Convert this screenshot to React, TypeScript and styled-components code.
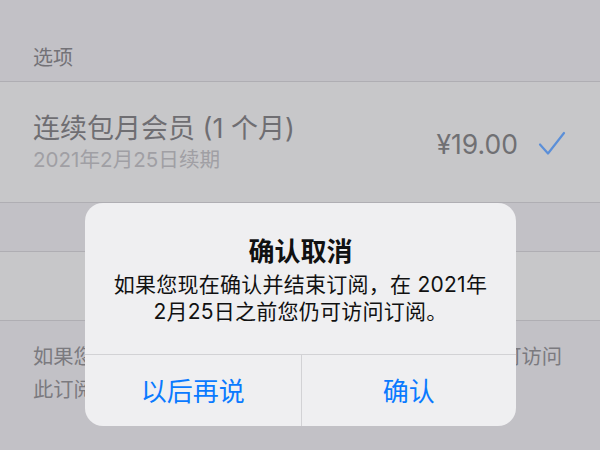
import React from "react";
import styled, { createGlobalStyle } from "styled-components";

const Global = createGlobalStyle`
  html, body { margin: 0; padding: 0; }
  body {
    width: 600px; height: 450px; overflow: hidden;
    background: #c2c1c6;
    font-family: Inter, "Noto Sans CJK SC", sans-serif;
  }
`;

const Page = styled.div`
  position: relative;
  width: 600px;
  height: 450px;
  background: #c2c1c6;
  overflow: hidden;
`;

const SectionHeader = styled.div`
  height: 82px;
  box-sizing: border-box;
  padding: 0 33px 10px;
  display: flex;
  align-items: flex-end;
  font-size: 20px;
  color: #737277;
  border-bottom: 1px solid #afaeb3;
`;

const Cell = styled.div<{ $h: number }>`
  height: ${(p) => p.$h}px;
  box-sizing: border-box;
  background: #c7c7c9;
  border-bottom: 1px solid #afaeb3;
  padding: 0 34px 0 33px;
  display: flex;
  align-items: center;
  justify-content: space-between;
`;

const Gap = styled.div`
  height: 48px;
  border-bottom: 1px solid #afaeb3;
`;

const TitleBlock = styled.div`
  display: flex;
  flex-direction: column;
  gap: 3px;
  margin-top: 0px;
`;

const CellTitle = styled.div`
  font-size: 27px;
  line-height: 32px;
  color: #6f6e72;
`;

const CellSub = styled.div`
  font-size: 20.6px;
  line-height: 24px;
  color: #a09fa4;
`;

const Trailing = styled.div`
  display: flex;
  align-items: center;
  gap: 20px;
  margin-top: 4px;
`;

const Price = styled.div`
  font-size: 26.5px;
  color: #707073;
`;

const Footer = styled.div`
  padding: 19px 33px 0;
  font-size: 20.3px;
  line-height: 33px;
  color: #7b7a7f;
  white-space: nowrap;
`;

const Dialog = styled.div`
  position: absolute;
  left: 85px;
  top: 203px;
  width: 431px;
  height: 223px;
  background: #efeff1;
  border-radius: 18px;
  display: flex;
  flex-direction: column;
  overflow: hidden;
`;

const DialogBody = styled.div`
  height: 152px;
  box-sizing: border-box;
  padding-top: 33px;
  border-bottom: 1px solid #d2d2d5;
  text-align: center;
  color: #111;
`;

const DialogTitle = styled.div`
  font-size: 26px;
  font-weight: 700;
  line-height: 32px;
  margin-bottom: 3px;
`;

const DialogText = styled.div`
  font-size: 21px;
  line-height: 27px;
  letter-spacing: 0.25px;
`;

const Buttons = styled.div`
  flex: 1;
  display: grid;
  grid-template-columns: 1fr 1fr;
`;

const DialogButton = styled.div<{ $divider?: boolean }>`
  display: flex;
  align-items: center;
  justify-content: center;
  font-size: 26px;
  color: #0a7aff;
  padding-bottom: 2px;
  ${(p) => (p.$divider ? "border-left: 1px solid #d2d2d5;" : "")}
`;

const Check = () => (
  <svg width="28" height="26" viewBox="0 0 28 26">
    <path d="M2 13.5 L10 22.5 L26 2" fill="none" stroke="#5b8fd8" strokeWidth="2.2" strokeLinecap="round" strokeLinejoin="round" />
  </svg>
);

export default function App() {
  return (
    <Page>
      <Global />
      <SectionHeader>选项</SectionHeader>
      <Cell $h={121}>
        <TitleBlock>
          <CellTitle>连续包月会员 (1 个月)</CellTitle>
          <CellSub>2021年2月25日续期</CellSub>
        </TitleBlock>
        <Trailing>
          <Price>¥19.00</Price>
          <Check />
        </Trailing>
      </Cell>
      <Gap />
      <Cell $h={69} />
      <Footer>
        如果您现在取消订阅，则在2021年2月25日之前您仍可访问
        <br />
        此订阅。
      </Footer>
      <Dialog>
        <DialogBody>
          <DialogTitle>确认取消</DialogTitle>
          <DialogText>
            如果您现在确认并结束订阅，在 2021年
            <br />
            2月25日之前您仍可访问订阅。
          </DialogText>
        </DialogBody>
        <Buttons>
          <DialogButton>以后再说</DialogButton>
          <DialogButton $divider>确认</DialogButton>
        </Buttons>
      </Dialog>
    </Page>
  );
}
